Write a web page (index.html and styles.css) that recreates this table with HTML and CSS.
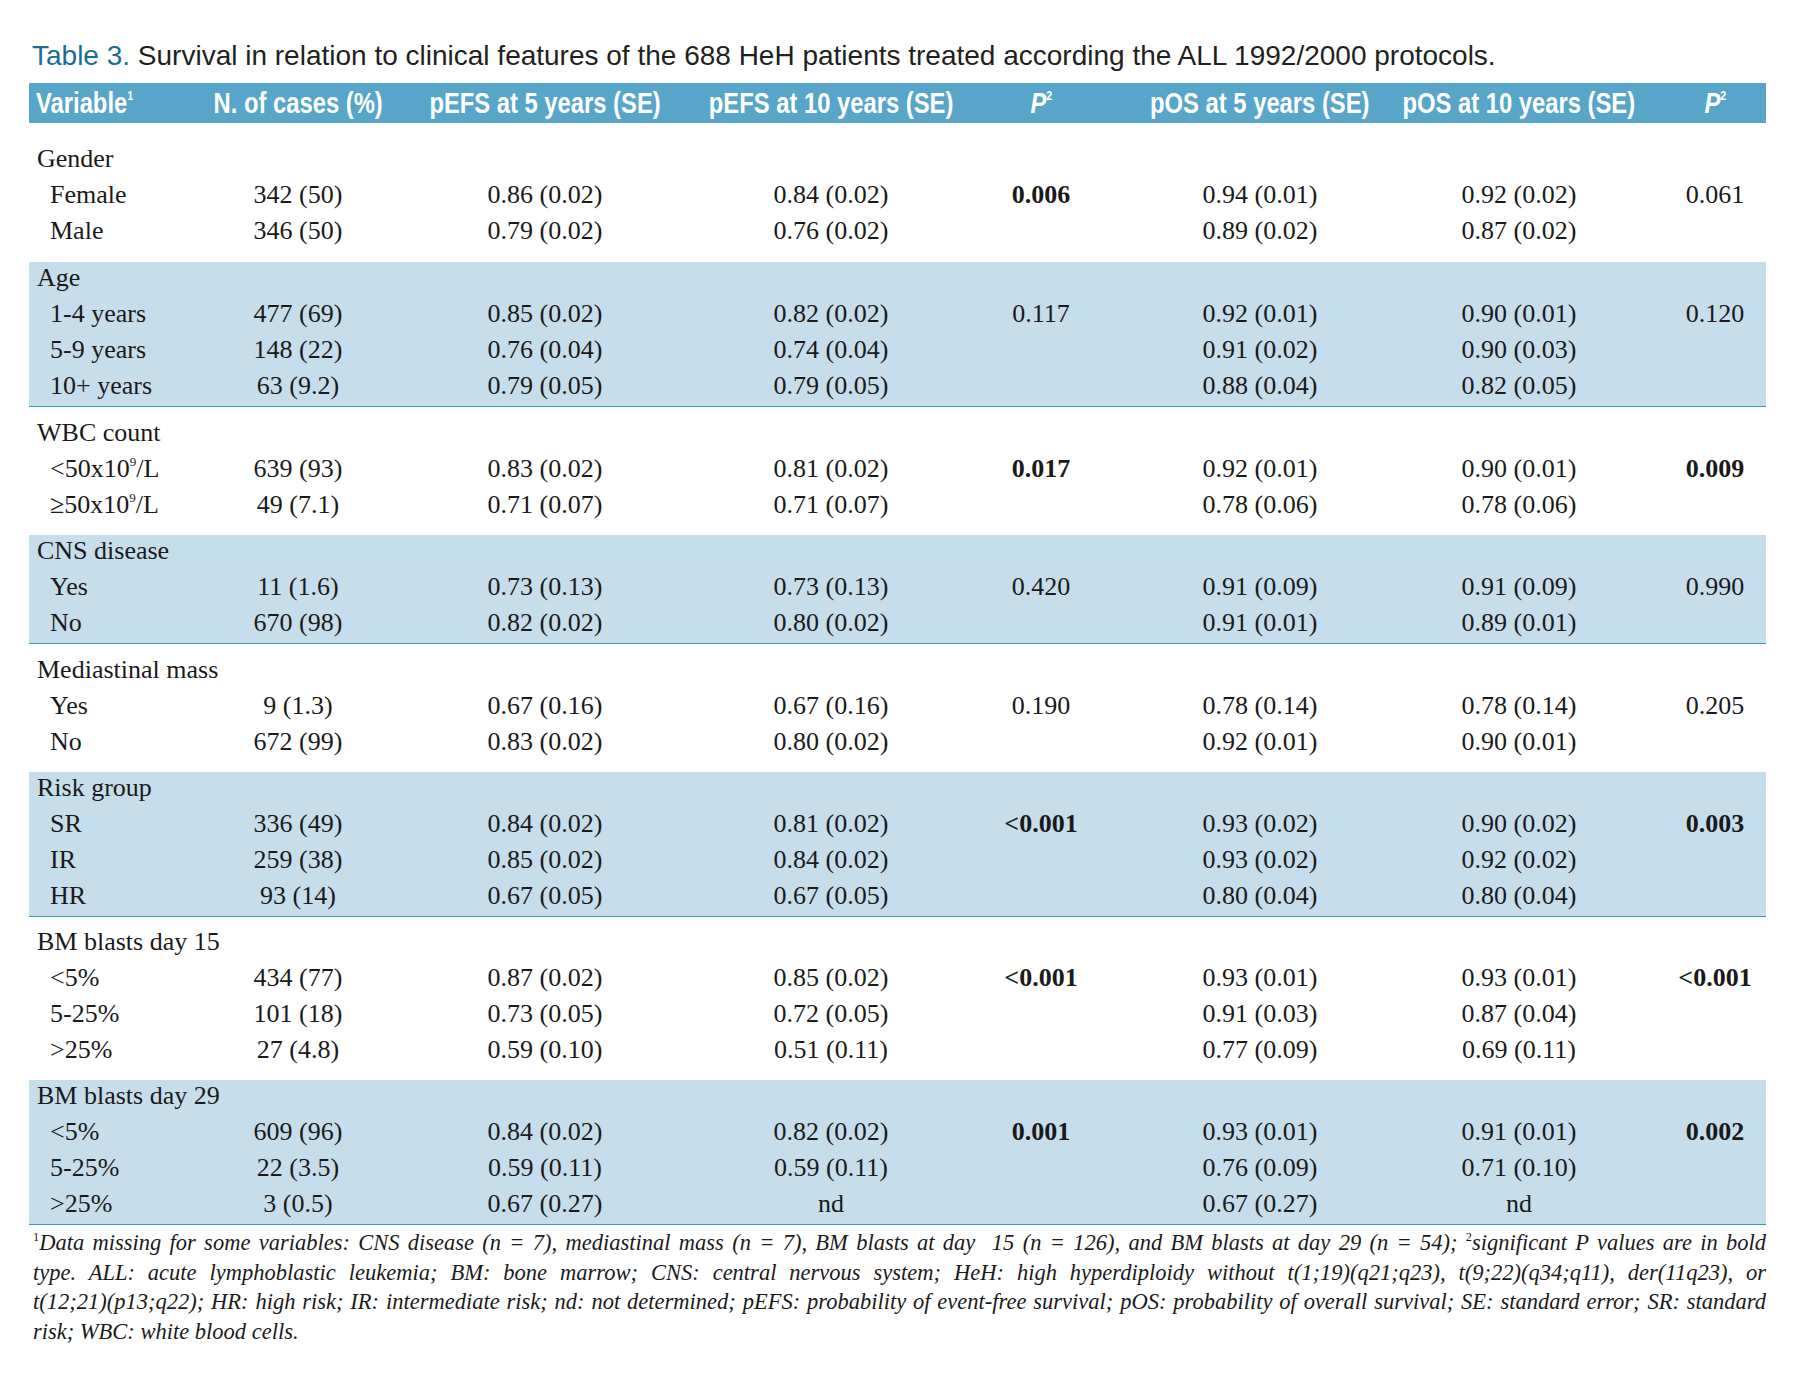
FILE: index.html
```html
<!DOCTYPE html>
<html lang="en">
<head>
<meta charset="utf-8">
<title>Table 3</title>
<link rel="stylesheet" href="styles.css">
</head>
<body>
<div class="page">
  <h1 class="title"><span class="tnum">Table 3.</span> Survival in relation to clinical features of the 688 HeH patients treated according the ALL 1992/2000 protocols.</h1>

  <div class="table">
    <div class="row head">
      <div class="c var"><span>Variable<sup>1</sup></span></div>
      <div class="c"><span>N. of cases (%)</span></div>
      <div class="c"><span>pEFS at 5 years (SE)</span></div>
      <div class="c"><span>pEFS at 10 years (SE)</span></div>
      <div class="c"><span><i>P</i><sup>2</sup></span></div>
      <div class="c"><span>pOS at 5 years (SE)</span></div>
      <div class="c"><span>pOS at 10 years (SE)</span></div>
      <div class="c last"><span><i>P</i><sup>2</sup></span></div>
    </div>

    <div class="group white first">
      <div class="row"><div class="c label">Gender</div></div>
      <div class="row"><div class="c sub">Female</div><div class="c">342 (50)</div><div class="c">0.86 (0.02)</div><div class="c">0.84 (0.02)</div><div class="c"><b>0.006</b></div><div class="c">0.94 (0.01)</div><div class="c">0.92 (0.02)</div><div class="c last">0.061</div></div>
      <div class="row"><div class="c sub">Male</div><div class="c">346 (50)</div><div class="c">0.79 (0.02)</div><div class="c">0.76 (0.02)</div><div class="c"></div><div class="c">0.89 (0.02)</div><div class="c">0.87 (0.02)</div><div class="c last"></div></div>
    </div>

    <div class="group blue">
      <div class="row"><div class="c label">Age</div></div>
      <div class="row"><div class="c sub">1-4 years</div><div class="c">477 (69)</div><div class="c">0.85 (0.02)</div><div class="c">0.82 (0.02)</div><div class="c">0.117</div><div class="c">0.92 (0.01)</div><div class="c">0.90 (0.01)</div><div class="c last">0.120</div></div>
      <div class="row"><div class="c sub">5-9 years</div><div class="c">148 (22)</div><div class="c">0.76 (0.04)</div><div class="c">0.74 (0.04)</div><div class="c"></div><div class="c">0.91 (0.02)</div><div class="c">0.90 (0.03)</div><div class="c last"></div></div>
      <div class="row"><div class="c sub">10+ years</div><div class="c">63 (9.2)</div><div class="c">0.79 (0.05)</div><div class="c">0.79 (0.05)</div><div class="c"></div><div class="c">0.88 (0.04)</div><div class="c">0.82 (0.05)</div><div class="c last"></div></div>
    </div>

    <div class="group white">
      <div class="row"><div class="c label">WBC count</div></div>
      <div class="row"><div class="c sub">&lt;50x10<sup>9</sup>/L</div><div class="c">639 (93)</div><div class="c">0.83 (0.02)</div><div class="c">0.81 (0.02)</div><div class="c"><b>0.017</b></div><div class="c">0.92 (0.01)</div><div class="c">0.90 (0.01)</div><div class="c last"><b>0.009</b></div></div>
      <div class="row"><div class="c sub">&ge;50x10<sup>9</sup>/L</div><div class="c">49 (7.1)</div><div class="c">0.71 (0.07)</div><div class="c">0.71 (0.07)</div><div class="c"></div><div class="c">0.78 (0.06)</div><div class="c">0.78 (0.06)</div><div class="c last"></div></div>
    </div>

    <div class="group blue">
      <div class="row"><div class="c label">CNS disease</div></div>
      <div class="row"><div class="c sub">Yes</div><div class="c">11 (1.6)</div><div class="c">0.73 (0.13)</div><div class="c">0.73 (0.13)</div><div class="c">0.420</div><div class="c">0.91 (0.09)</div><div class="c">0.91 (0.09)</div><div class="c last">0.990</div></div>
      <div class="row"><div class="c sub">No</div><div class="c">670 (98)</div><div class="c">0.82 (0.02)</div><div class="c">0.80 (0.02)</div><div class="c"></div><div class="c">0.91 (0.01)</div><div class="c">0.89 (0.01)</div><div class="c last"></div></div>
    </div>

    <div class="group white">
      <div class="row"><div class="c label">Mediastinal mass</div></div>
      <div class="row"><div class="c sub">Yes</div><div class="c">9 (1.3)</div><div class="c">0.67 (0.16)</div><div class="c">0.67 (0.16)</div><div class="c">0.190</div><div class="c">0.78 (0.14)</div><div class="c">0.78 (0.14)</div><div class="c last">0.205</div></div>
      <div class="row"><div class="c sub">No</div><div class="c">672 (99)</div><div class="c">0.83 (0.02)</div><div class="c">0.80 (0.02)</div><div class="c"></div><div class="c">0.92 (0.01)</div><div class="c">0.90 (0.01)</div><div class="c last"></div></div>
    </div>

    <div class="group blue">
      <div class="row"><div class="c label">Risk group</div></div>
      <div class="row"><div class="c sub">SR</div><div class="c">336 (49)</div><div class="c">0.84 (0.02)</div><div class="c">0.81 (0.02)</div><div class="c"><b>&lt;0.001</b></div><div class="c">0.93 (0.02)</div><div class="c">0.90 (0.02)</div><div class="c last"><b>0.003</b></div></div>
      <div class="row"><div class="c sub">IR</div><div class="c">259 (38)</div><div class="c">0.85 (0.02)</div><div class="c">0.84 (0.02)</div><div class="c"></div><div class="c">0.93 (0.02)</div><div class="c">0.92 (0.02)</div><div class="c last"></div></div>
      <div class="row"><div class="c sub">HR</div><div class="c">93 (14)</div><div class="c">0.67 (0.05)</div><div class="c">0.67 (0.05)</div><div class="c"></div><div class="c">0.80 (0.04)</div><div class="c">0.80 (0.04)</div><div class="c last"></div></div>
    </div>

    <div class="group white tight">
      <div class="row"><div class="c label">BM blasts day 15</div></div>
      <div class="row"><div class="c sub">&lt;5%</div><div class="c">434 (77)</div><div class="c">0.87 (0.02)</div><div class="c">0.85 (0.02)</div><div class="c"><b>&lt;0.001</b></div><div class="c">0.93 (0.01)</div><div class="c">0.93 (0.01)</div><div class="c last"><b>&lt;0.001</b></div></div>
      <div class="row"><div class="c sub">5-25%</div><div class="c">101 (18)</div><div class="c">0.73 (0.05)</div><div class="c">0.72 (0.05)</div><div class="c"></div><div class="c">0.91 (0.03)</div><div class="c">0.87 (0.04)</div><div class="c last"></div></div>
      <div class="row"><div class="c sub">&gt;25%</div><div class="c">27 (4.8)</div><div class="c">0.59 (0.10)</div><div class="c">0.51 (0.11)</div><div class="c"></div><div class="c">0.77 (0.09)</div><div class="c">0.69 (0.11)</div><div class="c last"></div></div>
    </div>

    <div class="group blue">
      <div class="row"><div class="c label">BM blasts day 29</div></div>
      <div class="row"><div class="c sub">&lt;5%</div><div class="c">609 (96)</div><div class="c">0.84 (0.02)</div><div class="c">0.82 (0.02)</div><div class="c"><b>0.001</b></div><div class="c">0.93 (0.01)</div><div class="c">0.91 (0.01)</div><div class="c last"><b>0.002</b></div></div>
      <div class="row"><div class="c sub">5-25%</div><div class="c">22 (3.5)</div><div class="c">0.59 (0.11)</div><div class="c">0.59 (0.11)</div><div class="c"></div><div class="c">0.76 (0.09)</div><div class="c">0.71 (0.10)</div><div class="c last"></div></div>
      <div class="row"><div class="c sub">&gt;25%</div><div class="c">3 (0.5)</div><div class="c">0.67 (0.27)</div><div class="c">nd</div><div class="c"></div><div class="c">0.67 (0.27)</div><div class="c">nd</div><div class="c last"></div></div>
    </div>
  </div>

  <div class="notes">
    <span class="line"><sup>1</sup>Data missing for some variables: CNS disease (n = 7), mediastinal mass (n = 7), BM blasts at day &nbsp;15 (n = 126), and BM blasts at day 29 (n = 54); <sup>2</sup>significant P values are in bold</span>
    <span class="line">type. ALL: acute lymphoblastic leukemia; BM: bone marrow; CNS: central nervous system; HeH: high hyperdiploidy without t(1;19)(q21;q23), t(9;22)(q34;q11), der(11q23), or</span>
    <span class="line dense">t(12;21)(p13;q22); HR: high risk; IR: intermediate risk; nd: not determined; pEFS: probability of event-free survival; pOS: probability of overall survival; SE: standard error; SR: standard</span>
    <span class="line end">risk; WBC: white blood cells.</span>
  </div>
</div>
</body>
</html>
```

FILE: styles.css
```css
html, body {
  margin: 0;
  padding: 0;
  background: #ffffff;
}

.page {
  width: 1737px;
  padding: 38px 0 0 29px;
  color: #1a1a1a;
}

.title {
  margin: 0 0 9px 0;
  padding-left: 3px;
  font-family: "Liberation Sans", Arial, sans-serif;
  font-size: 28px;
  line-height: 36px;
  font-weight: normal;
  color: #231f20;
  white-space: nowrap;
}

.tnum {
  color: #1b6d98;
}

.table {
  font-family: "Liberation Serif", "Times New Roman", serif;
  font-size: 26px;
}

.row {
  display: grid;
  grid-template-columns: 181px 176px 318px 254px 166px 272px 246px 124px;
  height: 36px;
  line-height: 32px;
  white-space: nowrap;
}

.c {
  text-align: center;
}

.c.last {
  padding-left: 22px;
}

.c b {
  font-weight: bold;
}

.c sup {
  font-size: 0.5em;
  line-height: 0;
  vertical-align: 0.85em;
}

.head {
  height: 40px;
  line-height: 40px;
  background: #57a6c9;
  color: #ffffff;
  font-family: "Liberation Sans", Arial, sans-serif;
  font-size: 29px;
  font-weight: bold;
}

.head .c {
  display: flex;
  justify-content: center;
  min-width: 0;
}

.head .c > span {
  display: inline-block;
  flex: none;
  transform: scaleX(0.82);
  transform-origin: 50% 50%;
}

.head .var {
  justify-content: flex-start;
  padding-left: 7px;
}

.head .var > span {
  transform-origin: 0 50%;
}

.head sup {
  font-size: 0.45em;
  vertical-align: 1em;
}

.label {
  grid-column: 1 / -1;
  text-align: left;
  padding-left: 8px;
}

.c.sub {
  text-align: left;
  padding-left: 21px;
}

.group.white {
  padding: 10px 0 10px 0;
}

.group.white.first {
  padding: 20px 0 11px 0;
}

.group.white.tight {
  padding: 9px 0 10px 0;
}

.group.blue {
  background: #c6ddec;
  border-bottom: 1px solid #3d9bb1;
}

.notes {
  margin-top: 3px;
  padding-left: 4px;
  font-family: "Liberation Serif", "Times New Roman", serif;
  font-style: italic;
  font-size: 22.5px;
  line-height: 29.7px;
  color: #1a1a1a;
}

.notes .line {
  display: block;
  text-align: justify;
  text-align-last: justify;
}

.notes .line.dense {
  word-spacing: -2px;
}

.notes .line.end {
  text-align-last: left;
}

.notes sup {
  font-size: 0.55em;
  line-height: 0;
  vertical-align: 0.7em;
  font-style: normal;
}
```
